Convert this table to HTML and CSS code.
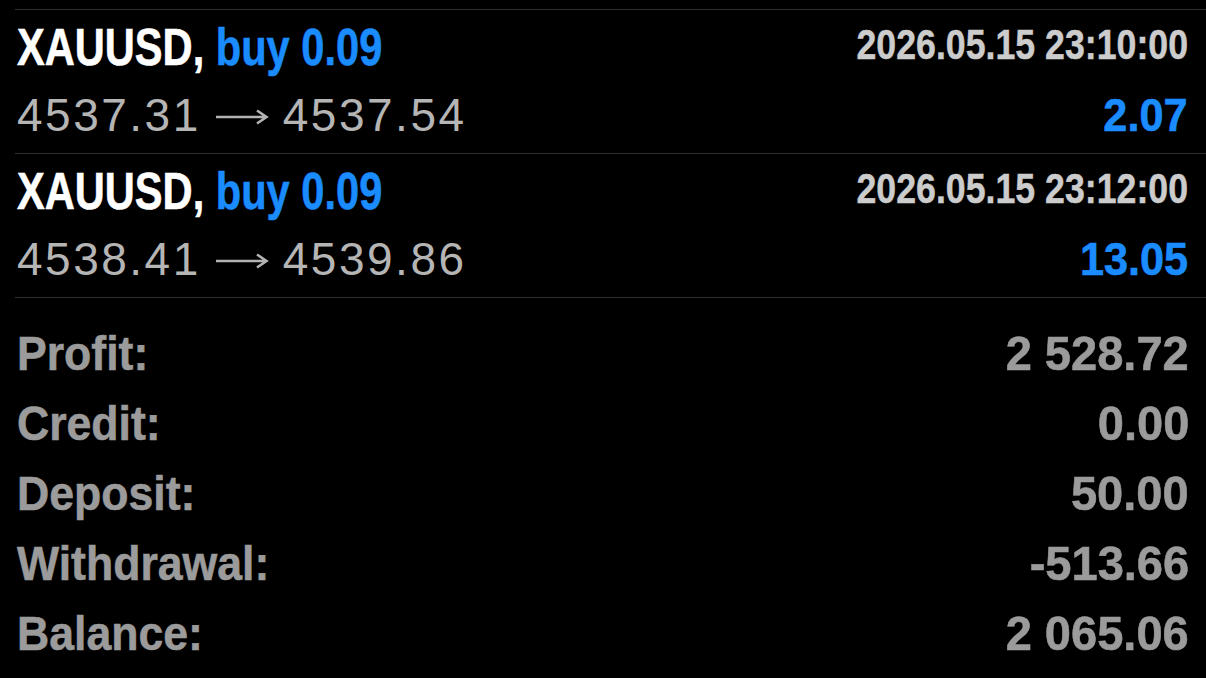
FILE: index.html
```html
<!DOCTYPE html>
<html lang="en">
<head>
<meta charset="utf-8">
<title>History</title>
<link rel="stylesheet" href="styles.css">
</head>
<body>
<div class="screen">
  <div class="deal">
    <div class="deal-head">
      <div class="title"><span class="symbol">XAUUSD,</span> <span class="side">buy 0.09</span></div>
      <div class="time">2026.05.15 23:10:00</div>
    </div>
    <div class="deal-body">
      <div class="prices"><span>4537.31</span><svg class="arrow" width="54" height="20" viewBox="0 0 54 20"><path d="M1 10H51M42 3.5L51.5 10L42 16.5" fill="none" stroke="#b3b3b3" stroke-width="2.6"/></svg><span>4537.54</span></div>
      <div class="profit">2.07</div>
    </div>
  </div>
  <div class="deal">
    <div class="deal-head">
      <div class="title"><span class="symbol">XAUUSD,</span> <span class="side">buy 0.09</span></div>
      <div class="time">2026.05.15 23:12:00</div>
    </div>
    <div class="deal-body">
      <div class="prices"><span>4538.41</span><svg class="arrow" width="54" height="20" viewBox="0 0 54 20"><path d="M1 10H51M42 3.5L51.5 10L42 16.5" fill="none" stroke="#b3b3b3" stroke-width="2.6"/></svg><span>4539.86</span></div>
      <div class="profit">13.05</div>
    </div>
  </div>
  <div class="summary">
    <div class="sum-row"><span class="label">Profit:</span><span class="value">2 528.72</span></div>
    <div class="sum-row"><span class="label">Credit:</span><span class="value">0.00</span></div>
    <div class="sum-row"><span class="label">Deposit:</span><span class="value">50.00</span></div>
    <div class="sum-row"><span class="label">Withdrawal:</span><span class="value">-513.66</span></div>
    <div class="sum-row"><span class="label">Balance:</span><span class="value">2 065.06</span></div>
  </div>
</div>
</body>
</html>
```

FILE: styles.css
```css
html, body {
  margin: 0;
  padding: 0;
  background: #000;
}

.screen {
  width: 1206px;
  height: 678px;
  overflow: hidden;
  padding-top: 9px;
  padding-left: 15px;
  box-sizing: border-box;
  font-family: "Liberation Sans", Arial, sans-serif;
}

.deal {
  border-top: 1px solid #2f2f2f;
  padding: 7px 18px 10px 2px;
}

.deal-head {
  display: flex;
  justify-content: space-between;
  align-items: flex-end;
}

.title {
  display: inline-block;
  font-size: 52px;
  line-height: 60px;
  font-weight: 700;
  white-space: nowrap;
  -webkit-text-stroke: 0.6px currentColor;
  transform: scaleX(0.8);
  transform-origin: left center;
}

.symbol {
  color: #ffffff;
  -webkit-text-stroke: 0.6px #ffffff;
}

.side {
  color: #1a8cff;
  -webkit-text-stroke: 0.6px #1a8cff;
}

.time {
  display: inline-block;
  font-size: 42px;
  line-height: 48px;
  font-weight: 700;
  color: #cccccc;
  -webkit-text-stroke: 0.5px #cccccc;
  margin-bottom: 8px;
  white-space: nowrap;
  transform: scaleX(0.85);
  transform-origin: right center;
}

.deal-body {
  display: flex;
  justify-content: space-between;
  align-items: baseline;
  margin-top: 10px;
}

.prices {
  display: flex;
  align-items: baseline;
  gap: 14px;
  font-size: 46px;
  line-height: 56px;
  letter-spacing: 2.5px;
  color: #b5b5b5;
}

.arrow {
  align-self: center;
  margin-top: 4px;
}

.profit {
  display: inline-block;
  font-size: 46px;
  line-height: 56px;
  font-weight: 700;
  color: #1a8cff;
  -webkit-text-stroke: 0.6px #1a8cff;
  transform: scaleX(0.94);
  transform-origin: right center;
}

.summary {
  border-top: 1px solid #2f2f2f;
  padding: 20px 17px 0 2px;
}

.sum-row {
  display: flex;
  justify-content: space-between;
  font-size: 49px;
  line-height: 70px;
  font-weight: 700;
  color: #9b9b9b;
  -webkit-text-stroke: 0.6px #9b9b9b;
}

.label {
  display: inline-block;
  white-space: nowrap;
  transform: scaleX(0.91);
  transform-origin: left center;
}

.value {
  display: inline-block;
  white-space: nowrap;
  transform: scaleX(0.96);
  transform-origin: right center;
}
```
